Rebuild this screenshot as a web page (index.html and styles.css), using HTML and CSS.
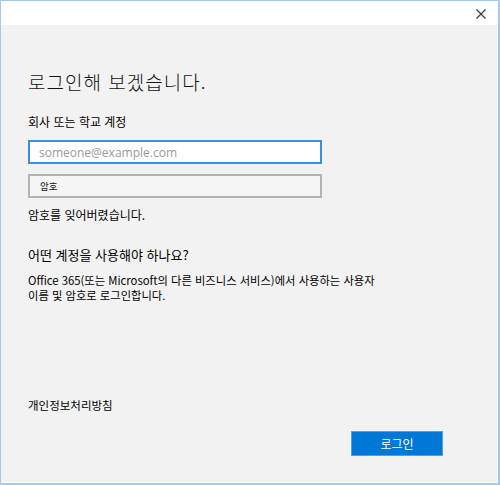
FILE: index.html
```html
<!DOCTYPE html>
<html lang="ko">
<head>
<meta charset="utf-8">
<link rel="stylesheet" href="styles.css">
</head>
<body>
<div class="window">
  <div class="titlebar">
    <svg class="close" width="10" height="10" viewBox="0 0 10 10"><path d="M0.5 0.5 L9.5 9.5 M9.5 0.5 L0.5 9.5" stroke="#333" stroke-width="1.1" fill="none"/></svg>
  </div>
  <div class="content">
    <h1 class="heading">로그인해 보겠습니다.</h1>
    <div class="label">회사 또는 학교 계정</div>
    <div class="input email">someone@example.com</div>
    <div class="input password"><span class="pw">암호</span></div>
    <div class="link">암호를 잊어버렸습니다.</div>
    <h2 class="subheading">어떤 계정을 사용해야 하나요?</h2>
    <p class="desc">Office 365(또는 Microsoft의 다른 비즈니스 서비스)에서 사용하는 사용자<br>이름 및 암호로 로그인합니다.</p>
    <div class="privacy">개인정보처리방침</div>
    <div class="actions"><button class="btn">로그인</button></div>
  </div>
</div>
</body>
</html>
```
FILE: styles.css
```css
* { box-sizing: border-box; }
html, body { margin: 0; padding: 0; }
body {
  width: 500px;
  height: 485px;
  background: #ffffff;
  font-family: "Noto Sans CJK KR", "Noto Sans", sans-serif;
  color: #000;
}
.window {
  width: 500px;
  height: 485px;
  border-top: 1px solid #a4c9ec;
  border-left: 1px solid #a4c9ec;
  border-right: 2px solid #a4c9ec;
  border-bottom: 2px solid #a4c9ec;
  display: flex;
  flex-direction: column;
  background: #ffffff;
}
.titlebar {
  height: 24px;
  background: #ffffff;
  display: flex;
  justify-content: flex-end;
  align-items: center;
  padding-right: 12px;
  flex-shrink: 0;
}
.close { display: block; margin-top: 2px; }
.content {
  flex: 1;
  background: #f2f2f2;
  border-right: 1px solid #ffffff;
  border-bottom: 1px solid #ffffff;
  padding-left: 27px;
  display: flex;
  flex-direction: column;
  align-items: flex-start;
}
.heading {
  margin: 44px 0 0 0;
  font-size: 19px;
  font-weight: 300;
  line-height: 26px;
  letter-spacing: 1px;
  color: #111;
}
.label {
  margin-top: 19px;
  font-size: 12px;
  line-height: 16px;
}
.input {
  width: 294px;
  height: 24px;
  border: 2px solid #b3b3b3;
  display: flex;
  align-items: center;
  padding-left: 9px;
}
.email {
  margin-top: 10px;
  background: #ffffff;
  border-color: #3d8fe3;
  font-family: "Open Sans", "Noto Sans", sans-serif;
  font-size: 12px;
  color: #9a9a9a;
}
.password {
  margin-top: 10px;
  background: #f5f5f5;
}
.pw {
  font-size: 9.5px;
  color: #111;
  padding-left: 1px;
}
.link {
  margin-top: 9px;
  font-size: 12px;
  line-height: 16px;
}
.subheading {
  margin: 23px 0 0 0;
  font-size: 13px;
  font-weight: 400;
  line-height: 18px;
}
.desc {
  margin: 9px 0 0 0;
  font-size: 11.3px;
  line-height: 15px;
}
.privacy {
  margin-top: 94px;
  font-size: 11.5px;
  line-height: 16px;
}
.actions {
  align-self: stretch;
  display: flex;
  justify-content: flex-end;
  padding-right: 54px;
  margin-top: 18px;
}
.btn {
  width: 92px;
  height: 25px;
  background: #0078d7;
  border: 1px solid #4f9fe6;
  color: #ffffff;
  font-family: "Noto Sans CJK KR", sans-serif;
  font-size: 12px;
  padding: 0;
}
```
